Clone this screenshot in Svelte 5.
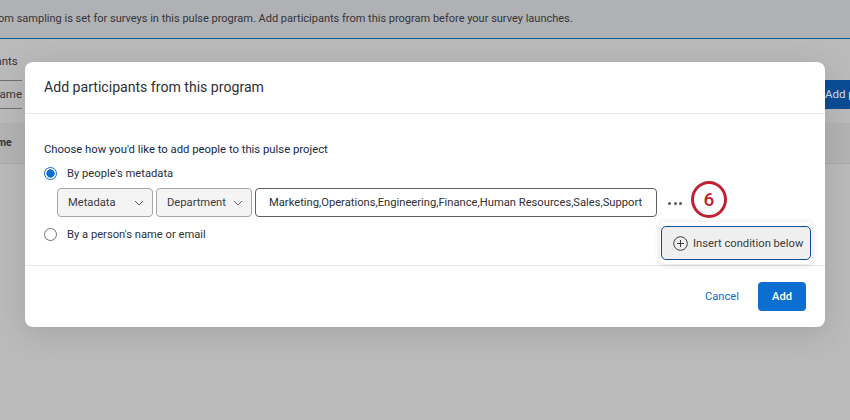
<script>
	let mode = $state('metadata');
	const departments = 'Marketing,Operations,Engineering,Finance,Human Resources,Sales,Support';
</script>

<div class="page">
	<div class="banner"><span>Random sampling is set for surveys in this pulse program. Add participants from this program before your survey launches.</span></div>
	<div class="behind">
		<div class="tab">Participants</div>
		<div class="toolbar">
			<div class="search">Search by name</div>
			<div class="add-btn">Add participants</div>
		</div>
		<div class="thead"><span>Name</span></div>
	</div>

	<div class="modal">
		<header>Add participants from this program</header>
		<section class="body">
			<p class="lead">Choose how you'd like to add people to this pulse project</p>
			<label class="radio">
				<input type="radio" bind:group={mode} value="metadata" />
				<span>By people's metadata</span>
			</label>
			<div class="condition">
				<button class="select first">Metadata
					<svg width="10" height="6" viewBox="0 0 10 6"><path d="M1 1l4 4 4-4" fill="none" stroke="#5f6166" stroke-width="1" /></svg>
				</button>
				<button class="select second">Department
					<svg width="10" height="6" viewBox="0 0 10 6"><path d="M1 1l4 4 4-4" fill="none" stroke="#5f6166" stroke-width="1" /></svg>
				</button>
				<div class="values">{departments}</div>
				<div class="dots"><i></i><i></i><i></i></div>
				<div class="step">6</div>
			</div>
			<label class="radio second-radio">
				<input type="radio" bind:group={mode} value="person" />
				<span>By a person's name or email</span>
			</label>
		</section>
		<footer>
			<button class="cancel">Cancel</button>
			<button class="add">Add</button>
		</footer>

		<div class="menu">
			<button class="menu-item">
				<svg width="15" height="15" viewBox="0 0 15 15"><circle cx="7.5" cy="7.5" r="6.8" fill="none" stroke="#3a3c41" stroke-width="1" /><path d="M7.5 4v7M4 7.5h7" stroke="#3a3c41" stroke-width="1" /></svg>
				Insert condition below
			</button>
		</div>
	</div>
</div>

<style>
	:global(body) {
		margin: 0;
	}

	.page {
		position: relative;
		width: 850px;
		height: 420px;
		overflow: hidden;
		background: #bababa;
		font-family: Roboto, 'Noto Sans', sans-serif;
		color: #2e3035;
	}

	.banner {
		height: 38px;
		line-height: 38px;
		background: #b0b1b5;
		border-bottom: 1px solid #0b5d9c;
		font-size: 11px;
		color: #33353a;
		white-space: nowrap;
	}

	.banner span {
		margin-left: -27px;
	}

	.behind {
		font-size: 11.5px;
		color: #33353a;
	}

	.tab {
		margin: 14px 0 0 -44px;
		height: 27px;
		line-height: 17px;
	}

	.toolbar {
		display: flex;
		justify-content: space-between;
		height: 29px;
		white-space: nowrap;
	}

	.search {
		margin-left: -70px;
		width: 92px;
		border-top: 1px solid #6f7073;
		border-bottom: 1px solid #6f7073;
		line-height: 27px;
		text-align: right;
		height: 27px;
		overflow: hidden;
	}

	.add-btn {
		flex: 0 0 25px;
		min-width: 0;
		padding-left: 2px;
		background: #0a4d96;
		color: #d7dde6;
		line-height: 29px;
	}

	.thead {
		height: 40px;
		margin-top: 14px;
		background: #b3b3b3;
		border-bottom: 1px solid #a9a9a9;
		font-weight: 700;
		font-size: 10.5px;
		line-height: 40px;
	}

	.thead span {
		margin-left: -16px;
	}

	.modal {
		position: absolute;
		left: 25px;
		top: 62px;
		width: 800px;
		height: 265px;
		background: #fff;
		border-radius: 8px;
		box-shadow: 0 6px 30px rgba(0, 0, 0, 0.12);
		display: flex;
		flex-direction: column;
	}

	header {
		height: 51px;
		line-height: 50px;
		padding-left: 19px;
		border-bottom: 1px solid #e8e9ea;
		font-size: 14.1px;
	}

	.body {
		flex: 1;
		padding: 28px 19px 0;
		border-bottom: 1px solid #e8e9ea;
		font-size: 11.2px;
	}

	.lead {
		margin: 0;
		line-height: 16px;
		font-size: 11.3px;
		color: #11294a;
	}

	.radio {
		display: flex;
		align-items: center;
		gap: 10px;
		height: 16px;
		margin-top: 7px;
	}

	.radio input {
		appearance: none;
		-webkit-appearance: none;
		width: 13px;
		height: 13px;
		margin: 0;
		border-radius: 50%;
		border: 1px solid #6e7076;
		background: #fff;
		box-sizing: border-box;
	}

	.radio input:checked {
		border-color: #0b6ed0;
		background: radial-gradient(circle, #0b6ed0 0 3.9px, #fff 4.4px);
	}

	.second-radio {
		margin-top: 9px;
	}

	.condition {
		display: flex;
		align-items: center;
		gap: 3px;
		margin: 7px 0 0 13px;
		height: 29px;
	}

	.select {
		display: flex;
		align-items: center;
		justify-content: space-between;
		width: 96px;
		height: 29px;
		padding: 0 8px 0 10px;
		background: #f4f4f5;
		border: 1px solid #a3a5a9;
		border-radius: 4px;
		font: inherit;
		color: #3a3c41;
	}

	.values {
		width: 402px;
		height: 29px;
		line-height: 27px;
		padding: 0 13px;
		box-sizing: border-box;
		border: 1px solid #5e6065;
		border-radius: 4px;
		white-space: nowrap;
		overflow: hidden;
		color: #2e3035;
	}

	.dots {
		display: flex;
		gap: 2.5px;
		margin-left: 8px;
		margin-top: 1px;
	}

	.dots i {
		width: 3px;
		height: 3px;
		border-radius: 50%;
		background: #55575c;
	}

	.step {
		width: 36px;
		height: 37px;
		margin: -6px 0 0 6px;
		box-sizing: border-box;
		border: 3px solid #c0202f;
		border-radius: 50%;
		color: #c0202f;
		font-size: 19px;
		font-weight: 500;
		line-height: 31px;
		text-align: center;
	}

	footer {
		height: 61px;
		display: flex;
		align-items: center;
		justify-content: flex-end;
		gap: 19px;
		padding-right: 19px;
	}

	footer button {
		font: inherit;
		font-size: 11.2px;
		border: 0;
		padding: 0;
	}

	.cancel {
		background: none;
		color: #0b6ed0;
	}

	.add {
		width: 48px;
		height: 29px;
		background: #0b6ed0;
		color: #fff;
		font-weight: 500;
		border-radius: 4px;
	}

	.menu {
		position: absolute;
		left: 635px;
		top: 160px;
		padding: 4px 1px;
		background: #fff;
		border-radius: 4px;
		box-shadow: 0 1px 6px rgba(0, 0, 0, 0.15);
	}

	.menu-item {
		display: flex;
		align-items: center;
		gap: 5px;
		width: 150px;
		height: 34px;
		padding: 0 0 0 11px;
		box-sizing: border-box;
		background: #efefef;
		border: 1.5px solid #0a4d96;
		border-radius: 5px;
		font: inherit;
		font-size: 11.2px;
		color: #3a3c41;
		white-space: nowrap;
	}
</style>
